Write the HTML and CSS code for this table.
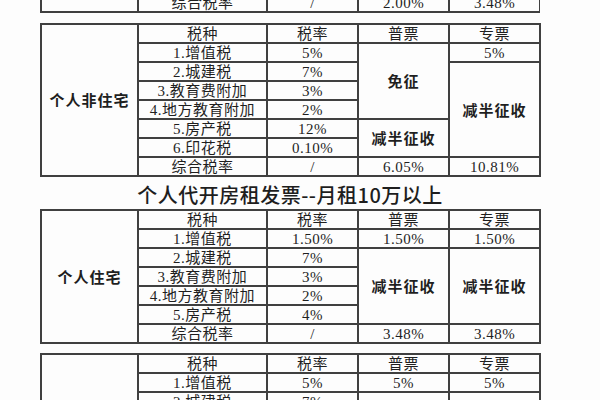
FILE: index.html
```html
<!DOCTYPE html>
<html lang="zh-CN">
<head>
<meta charset="utf-8">
<title>个人代开房租发票</title>
<link rel="stylesheet" href="styles.css">
</head>
<body>
<div class="page">
  <div class="clip">
    <table class="tax">
      <colgroup><col class="c1"><col class="c2"><col class="c3"><col class="c4"><col class="c5"></colgroup>
      <tr><td class="label"></td><td>综合税率</td><td>/</td><td>2.00%</td><td>3.48%</td></tr>
    </table>
  </div>

  <table class="tax t2">
    <colgroup><col class="c1"><col class="c2"><col class="c3"><col class="c4"><col class="c5"></colgroup>
    <tr><td class="label" rowspan="8">个人非住宅</td><td>税种</td><td>税率</td><td>普票</td><td>专票</td></tr>
    <tr><td>1.增值税</td><td>5%</td><td class="big" rowspan="4">免征</td><td>5%</td></tr>
    <tr><td>2.城建税</td><td>7%</td><td class="big" rowspan="5">减半征收</td></tr>
    <tr><td>3.教育费附加</td><td>3%</td></tr>
    <tr><td>4.地方教育附加</td><td>2%</td></tr>
    <tr><td>5.房产税</td><td>12%</td><td class="big" rowspan="2">减半征收</td></tr>
    <tr><td>6.印花税</td><td>0.10%</td></tr>
    <tr><td>综合税率</td><td>/</td><td>6.05%</td><td>10.81%</td></tr>
  </table>

  <h2 class="title">个人代开房租发票--月租10万以上</h2>

  <table class="tax t3">
    <colgroup><col class="c1"><col class="c2"><col class="c3"><col class="c4"><col class="c5"></colgroup>
    <tr><td class="label" rowspan="7">个人住宅</td><td>税种</td><td>税率</td><td>普票</td><td>专票</td></tr>
    <tr><td>1.增值税</td><td>1.50%</td><td>1.50%</td><td>1.50%</td></tr>
    <tr><td>2.城建税</td><td>7%</td><td class="big" rowspan="4">减半征收</td><td class="big" rowspan="4">减半征收</td></tr>
    <tr><td>3.教育费附加</td><td>3%</td></tr>
    <tr><td>4.地方教育附加</td><td>2%</td></tr>
    <tr><td>5.房产税</td><td>4%</td></tr>
    <tr><td>综合税率</td><td>/</td><td>3.48%</td><td>3.48%</td></tr>
  </table>

  <table class="tax t4">
    <colgroup><col class="c1"><col class="c2"><col class="c3"><col class="c4"><col class="c5"></colgroup>
    <tr><td class="label" rowspan="4"></td><td>税种</td><td>税率</td><td>普票</td><td>专票</td></tr>
    <tr><td>1.增值税</td><td>5%</td><td>5%</td><td>5%</td></tr>
    <tr><td>2.城建税</td><td>7%</td><td class="big" rowspan="2"></td><td class="big" rowspan="2"></td></tr>
    <tr><td>3.教育费附加</td><td>3%</td></tr>
  </table>
</div>
</body>
</html>
```

FILE: styles.css
```css
html, body {
  margin: 0;
  padding: 0;
  background: #fdfdfd;
}

body {
  font-family: "Liberation Serif", "Noto Sans CJK SC", serif;
  color: #1f1f1f;
}

.page {
  padding-left: 40px;
  width: 500px;
}

.clip {
  height: 13px;
  overflow: hidden;
  display: flex;
  align-items: flex-end;
  margin-bottom: 10px;
}

.tax {
  border-collapse: collapse;
  table-layout: fixed;
  width: 499px;
  font-size: 15px;
  border: 2px solid #383838;
}

.tax col.c1 { width: 97px; }
.tax col.c2 { width: 129px; }
.tax col.c3 { width: 91px; }
.tax col.c4 { width: 91px; }
.tax col.c5 { width: 91px; }

.tax tr {
  height: 19px;
}

.tax td {
  border: 2px solid #404040;
  height: 15px;
  padding: 0;
  text-align: center;
  vertical-align: middle;
  line-height: 12px;
  letter-spacing: 0.5px;
  white-space: nowrap;
}

.tax td.label {
  font-family: "Noto Sans CJK SC", sans-serif;
  font-weight: 700;
  font-size: 15px;
  letter-spacing: 1px;
}

.tax td.big {
  font-family: "Noto Sans CJK SC", sans-serif;
  font-weight: 700;
  font-size: 15px;
  letter-spacing: 1px;
}

.title {
  margin: 0;
  height: 32px;
  line-height: 36px;
  text-align: center;
  font-family: "Noto Sans CJK SC", sans-serif;
  font-weight: 500;
  font-size: 20px;
  letter-spacing: 0.5px;
  color: #1e1e1e;
}

.t4 {
  margin-top: 9px;
}
```
